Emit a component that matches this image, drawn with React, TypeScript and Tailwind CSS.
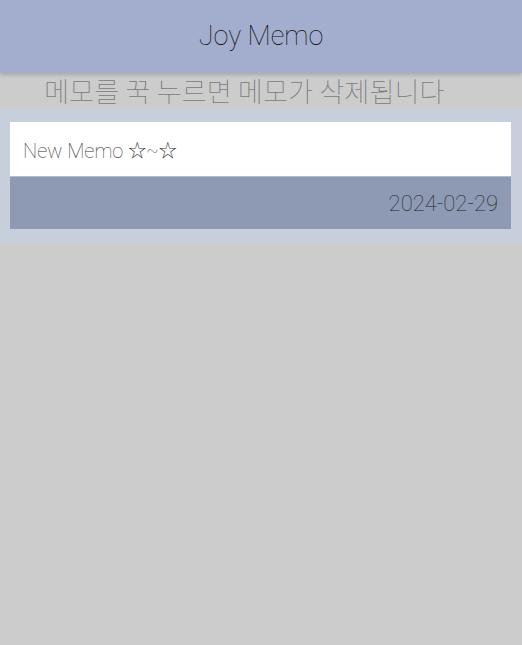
export default function App() {
  return (
    <div className="min-h-[645px] bg-[#cccccc] font-['Roboto','Noto_Sans_CJK_KR',sans-serif] font-[270]">
      {/* Header */}
      <div className="relative z-10 flex h-[73px] items-center justify-center bg-[#a3aecf] shadow-[0_2px_4px_rgba(0,0,0,0.18)]">
        <h1 className="text-[27px] text-[#111]">Joy Memo</h1>
      </div>

      {/* Hint */}
      <div className="flex h-[36px] items-center pl-[44px]">
        <p className="font-['Noto_Sans_CJK_KR',sans-serif] text-[27.3px] font-thin leading-none text-[#7a7a7a]">
          메모를 꾹 누르면 메모가 삭제됩니다
        </p>
      </div>

      {/* Memo list */}
      <div className="bg-[#c8cfdc] pb-[14px] pl-[10px] pr-[11px] pt-[13px]">
        <div className="flex flex-col">
          <div className="flex h-[54px] items-center bg-white px-[13px] pt-[3px] text-[20px] text-[#333]">
            New Memo <span className="ml-[5px] text-[18px]">☆~☆</span>
          </div>
          <div className="flex h-[53px] items-center justify-end border-t border-[#b5bdcc] bg-[#8e9ab3] px-[13px] text-[22px] text-[#1e1e1e]">
            2024-02-29
          </div>
        </div>
      </div>
    </div>
  );
}
